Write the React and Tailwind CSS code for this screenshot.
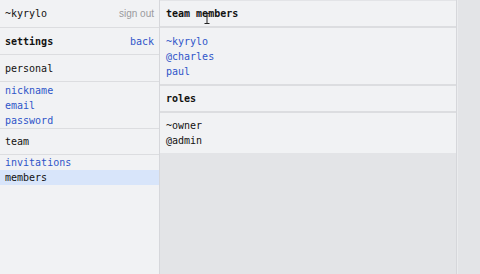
import React from "react";

const mono = { fontFamily: '"DejaVu Sans Mono", monospace' };

export default function App() {
  return (
    <div
      className="flex w-[480px] h-[274px] bg-[#e3e4e7] text-[10px] leading-[15px] text-[#111]"
      style={mono}
    >
      {/* left panel */}
      <div className="w-[160px] shrink-0 bg-[#f1f2f4] border-r border-[#d6d7db] flex flex-col">
        <div className="h-[28px] flex items-center justify-between px-[5px] border-b border-[#dcdde0]">
          <span>~kyrylo</span>
          <span className="text-[#9a9a9e] text-[10px] font-['Liberation_Sans',sans-serif]">sign out</span>
        </div>
        <div className="h-[27px] flex items-center justify-between px-[5px] border-b border-[#dcdde0]">
          <span className="font-bold">settings</span>
          <span className="text-[#2f55c9]">back</span>
        </div>
        <div className="h-[27px] flex items-center px-[5px] border-b border-[#dcdde0]">
          personal
        </div>
        <div className="flex flex-col pt-[1px] border-b border-[#dcdde0] text-[#2f55c9]">
          <span className="px-[5px] h-[15px]">nickname</span>
          <span className="px-[5px] h-[15px]">email</span>
          <span className="px-[5px] h-[15px]">password</span>
        </div>
        <div className="h-[26px] flex items-center px-[5px] border-b border-[#dcdde0]">
          team
        </div>
        <div className="flex flex-col">
          <span className="px-[5px] h-[15px] text-[#2f55c9]">invitations</span>
          <span className="px-[5px] h-[15px] bg-[#d8e5fa]">members</span>
        </div>
      </div>

      {/* middle panel */}
      <div className="w-[297px] shrink-0 flex flex-col border-r border-[#d6d7db]">
        <div className="bg-[#f1f2f4] border-t border-[#e3e4e7]">
          <div className="relative h-[27px] flex items-center px-[6px] border-b-2 border-[#dcdde0]">
            <span className="font-bold">team members</span>
            <svg
              className="absolute left-[44px] top-[12px]"
              width="6"
              height="11"
              viewBox="0 0 6 11"
            >
              <path d="M0.5 0.5h5M3 0.5v10M0.5 10.5h5" stroke="#222" strokeWidth="1" fill="none" />
            </svg>
          </div>
          <div className="flex flex-col pt-[6px] pb-[5px] px-[6px] text-[#2f55c9] border-b-2 border-[#dcdde0]">
            <span>~kyrylo</span>
            <span>@charles</span>
            <span>paul</span>
          </div>
          <div className="h-[27px] flex items-center px-[6px] border-b-2 border-[#dcdde0]">
            <span className="font-bold">roles</span>
          </div>
          <div className="flex flex-col pt-[5px] pb-[5px] px-[6px]">
            <span>~owner</span>
            <span>@admin</span>
          </div>
        </div>
      </div>

      {/* right strip */}
      <div className="flex-1 bg-[#e3e4e7] border-l border-[#ebecee]" />
    </div>
  );
}
